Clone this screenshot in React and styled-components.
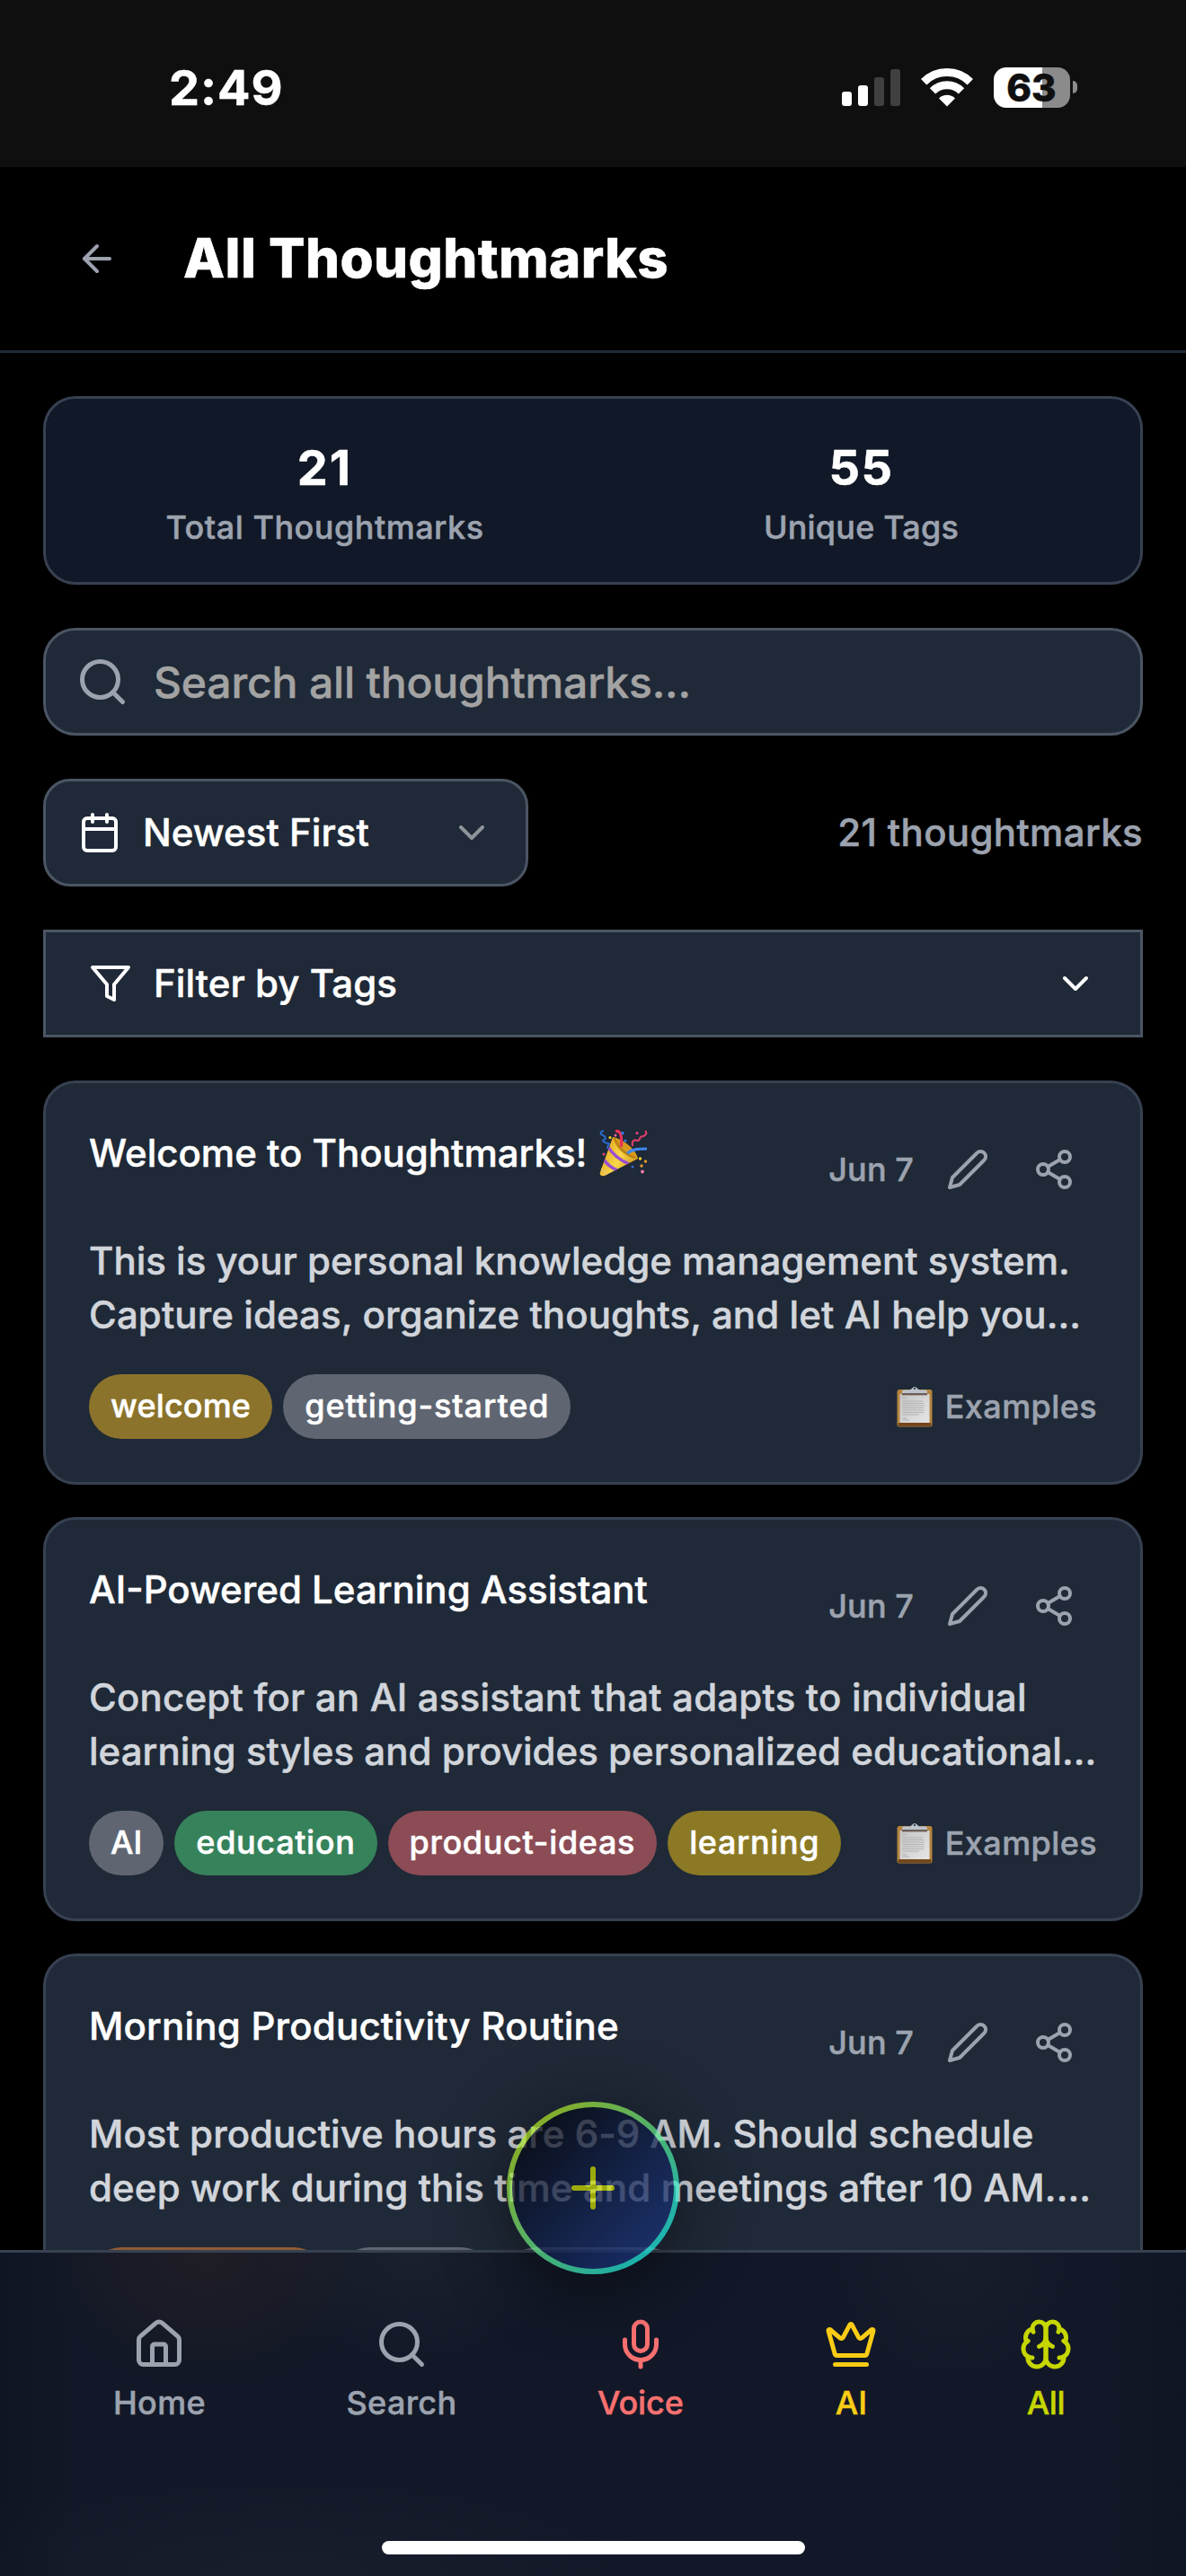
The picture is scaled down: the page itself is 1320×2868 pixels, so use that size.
import React from "react";
import styled, { createGlobalStyle } from "styled-components";
import {
  ArrowLeft,
  Search,
  Calendar,
  ChevronDown,
  Share2,
  House,
  Mic,
  Crown,
  Plus,
} from "lucide-react";

const GlobalStyle = createGlobalStyle`
  * { box-sizing: border-box; }
  html, body { margin: 0; padding: 0; background: #000; }
  body {
    font-family: Inter, "Liberation Sans", sans-serif;
    font-weight: 500;
    color: #fff;
    -webkit-font-smoothing: antialiased;
    -webkit-text-stroke: 0.5px currentColor;
  }
  svg { display: block; flex: none; }
`;

const Text = styled.span`
  letter-spacing: ${(p) => p.$tracking || 0}px;
`;

const Screen = styled.div`
  position: relative;
  width: 1320px;
  height: 2868px;
  overflow: hidden;
  background: #000;
`;

const StatusBar = styled.div`
  display: flex;
  align-items: center;
  justify-content: space-between;
  height: 186px;
  padding: 8px 121px 0 188px;
  background: #0f0f0f;
`;

const Clock = styled(Text)`
  padding-top: 1px;
  font-size: 54px;
  font-weight: 700;
  line-height: 60px;
`;

const StatusIcons = styled.div`
  display: flex;
  align-items: center;
  gap: 23px;
`;

const Signal = styled.div`
  display: flex;
  align-items: flex-end;
  gap: 7px;
  height: 41px;
`;

const SignalBar = styled.span`
  width: 11px;
  height: ${(p) => p.$h}px;
  border-radius: 3px;
  background: ${(p) => (p.$on ? "#fff" : "#404040")};
`;

const Battery = styled.div`
  display: flex;
  align-items: center;
  gap: 3px;
`;

const BatteryBody = styled.div`
  display: flex;
  align-items: center;
  justify-content: center;
  width: 85px;
  height: 45px;
  padding-right: 1px;
  border-radius: 14px;
  background: linear-gradient(90deg, #fff 54px, #8b8b8b 54px);
  color: #0f0f0f;
  font-size: 42px;
  font-weight: 800;
  line-height: 45px;
`;

const BatteryNub = styled.span`
  width: 5px;
  height: 14px;
  border-radius: 0 7px 7px 0;
  background: #8b8b8b;
`;

const Header = styled.header`
  display: flex;
  align-items: center;
  gap: 36px;
  height: 207px;
  padding: 0 48px;
  border-bottom: 3px solid #1f2937;
`;

const BackButton = styled.button`
  display: flex;
  padding: 36px;
  border: 0;
  background: none;
  color: #9ca3af;
`;

const Title = styled.h1`
  margin: 0;
  padding-bottom: 2px;
  font-size: 60px;
  font-weight: 800;
  line-height: 84px;
  letter-spacing: 0.4px;
`;

const Main = styled.main`
  display: flex;
  flex-direction: column;
  gap: 48px;
  padding: 48px;
`;

const Stats = styled.section`
  display: grid;
  grid-template-columns: 1fr 1fr;
  gap: 48px;
  height: 210px;
  padding: 36px;
  border: 3px solid #374151;
  border-radius: 36px;
  background: #111827;
  text-align: center;
`;

const StatValue = styled.div`
  margin-bottom: 1px;
  font-size: 54px;
  font-weight: 700;
  line-height: 82px;
`;

const StatLabel = styled.div`
  color: #9ca3af;
  font-size: 36px;
  line-height: 48px;
`;

const SearchField = styled.label`
  display: flex;
  align-items: center;
  gap: 27px;
  height: 120px;
  padding: 0 33px;
  border: 3px solid #4b5563;
  border-radius: 36px;
  background: #1f2937;
  color: #9ca3af;
`;

const Placeholder = styled(Text)`
  padding-top: 1px;
  color: #a3a3a3;
  font-size: 48px;
  line-height: 72px;
`;

const SortRow = styled.div`
  display: flex;
  align-items: center;
  justify-content: space-between;
`;

const SortSelect = styled.button`
  display: flex;
  align-items: center;
  gap: 24px;
  width: 540px;
  height: 120px;
  padding: 0 36px;
  border: 3px solid #4b5563;
  border-radius: 30px;
  background: #1f2937;
  color: #fff;
  font: inherit;
`;

const FilterButton = styled(SortSelect)`
  width: 100%;
  padding: 0 48px;
  border-radius: 0;
`;

const ControlText = styled(Text)`
  flex: 1;
  text-align: left;
  font-size: 42px;
  line-height: 60px;
`;

const ResultCount = styled(Text)`
  color: #9ca3af;
  font-size: 42px;
  line-height: 60px;
`;

const CardList = styled.div`
  display: flex;
  flex-direction: column;
  gap: 36px;
`;

const Card = styled.article`
  height: 450px;
  padding: 48px;
  border: 3px solid #374151;
  border-radius: 36px;
  background: #1f2937;
`;

const CardHeader = styled.div`
  display: flex;
  align-items: flex-start;
  justify-content: space-between;
  margin-bottom: 24px;
`;

const CardTitle = styled.h3`
  display: flex;
  align-items: center;
  gap: 14px;
  margin: 0;
  font-size: 42px;
  font-weight: 500;
  line-height: 60px;
  white-space: nowrap;
`;

const CardActions = styled.div`
  display: flex;
  align-items: center;
  color: #9ca3af;
`;

const CardDate = styled.span`
  margin-right: 12px;
  padding-bottom: 1px;
  font-size: 36px;
  line-height: 48px;
  letter-spacing: 0.1px;
`;

const IconButton = styled.button`
  display: flex;
  padding: 24px;
  border: 0;
  background: none;
  color: inherit;
`;

const Excerpt = styled.p`
  margin: 0 0 36px;
  color: #d1d5db;
  font-size: 42px;
  line-height: 60px;
  white-space: nowrap;
`;

const CardFooter = styled.div`
  display: flex;
  align-items: center;
  justify-content: space-between;
`;

const Tags = styled.div`
  display: flex;
  gap: 12px;
`;

const Tag = styled(Text)`
  height: 72px;
  padding: 0 24px;
  border-radius: 36px;
  background: ${(p) => p.$bg};
  font-size: 36px;
  line-height: 71px;
`;

const Bin = styled.span`
  display: flex;
  align-items: center;
  gap: 14px;
  color: #9ca3af;
  font-size: 36px;
  line-height: 47px;
  letter-spacing: 0.4px;
`;

const BottomNav = styled.nav`
  position: absolute;
  left: 0;
  right: 0;
  bottom: 0;
  display: flex;
  flex-direction: column;
  align-items: center;
  justify-content: space-between;
  height: 363px;
  padding: 72px 0 24px;
  border-top: 3px solid #374151;
  background:
    radial-gradient(190px 150px at 230px 0, rgba(110, 60, 30, 0.15), rgba(110, 60, 30, 0)) padding-box,
    radial-gradient(170px 130px at 460px 0, rgba(95, 102, 114, 0.1), rgba(95, 102, 114, 0)) padding-box,
    radial-gradient(150px 160px at 1060px 0, rgba(95, 102, 114, 0.07), rgba(95, 102, 114, 0)) padding-box,
    radial-gradient(420px 120px at 320px 100%, rgba(95, 102, 114, 0.08), rgba(95, 102, 114, 0)) padding-box,
    linear-gradient(90deg, #0f1522, #121827 80px, #121827 1240px, #0f1522) padding-box;
`;

const NavItems = styled.div`
  display: flex;
  justify-content: space-between;
  align-self: stretch;
  padding: 0 126px;
`;

const NavItem = styled.a`
  display: flex;
  flex-direction: column;
  align-items: center;
  gap: 11px;
  color: ${(p) => p.$color};
  font-size: 36px;
  line-height: 48px;
`;

const HomeIndicator = styled.div`
  width: 471px;
  height: 15px;
  border-radius: 8px;
  background: #fff;
`;

const AddButton = styled.button`
  position: absolute;
  left: 564px;
  top: 2340px;
  display: flex;
  align-items: center;
  justify-content: center;
  width: 192px;
  height: 192px;
  padding: 0;
  border: 6px solid transparent;
  border-radius: 50%;
  background:
    linear-gradient(135deg, #000 0%, #1e3a8a 100%) padding-box,
    linear-gradient(135deg, #c6d800 0%, #00e5ff 100%) border-box;
  box-shadow: 0 12px 72px rgba(0, 0, 0, 0.6);
  color: #c6d600;
  opacity: 0.75;
`;

const WifiIcon = () => (
  <svg width="58" height="43" viewBox="0 0 58 43">
    <g fill="none" stroke="#fff">
      <path d="M3.2 15.2 A36.5 36.5 0 0 1 54.8 15.2" strokeWidth="9" />
      <path d="M13 25.4 A22.6 22.6 0 0 1 45 25.4" strokeWidth="9" />
    </g>
    <path d="M29 42.5 L20 33.4 A12.7 12.7 0 0 1 38 33.4 Z" fill="#fff" />
  </svg>
);

const StrokeIcon = ({ size, children }) => (
  <svg
    width={size}
    height={size}
    viewBox="0 0 24 24"
    fill="none"
    stroke="currentColor"
    strokeWidth="2"
    strokeLinecap="round"
    strokeLinejoin="round"
  >
    {children}
  </svg>
);

const FilterIcon = () => (
  <StrokeIcon size={48}>
    <polygon points="22 3 2 3 10 12.46 10 19 14 21 14 12.46 22 3" />
  </StrokeIcon>
);

const PenIcon = () => (
  <StrokeIcon size={48}>
    <path d="M17 3a2.85 2.83 0 1 1 4 4L7.5 20.5 2 22l1.5-5.5Z" />
  </StrokeIcon>
);

const BrainIcon = () => (
  <StrokeIcon size={60}>
    <path d="M12 5a3 3 0 1 0-5.997.125 4 4 0 0 0-2.526 5.77 4 4 0 0 0 .556 6.588A4 4 0 1 0 12 18Z" />
    <path d="M12 5a3 3 0 1 1 5.997.125 4 4 0 0 1 2.526 5.77 4 4 0 0 1-.556 6.588A4 4 0 1 1 12 18Z" />
    <path d="M15 13a4.5 4.5 0 0 1-3-4 4.5 4.5 0 0 1-3 4" />
    <path d="M17.599 6.5a3 3 0 0 0 .399-1.375" />
    <path d="M6.003 5.125A3 3 0 0 0 6.401 6.5" />
    <path d="M3.477 10.896a4 4 0 0 1 .585-.396" />
    <path d="M19.938 10.5a4 4 0 0 1 .585.396" />
    <path d="M6 18a4 4 0 0 1-1.967-.516" />
    <path d="M19.967 17.484A4 4 0 0 1 18 18" />
  </StrokeIcon>
);

const PartyPopper = () => (
  <svg width="54" height="54" viewBox="0 0 54 54">
    <defs>
      <linearGradient id="cone" x1="0" y1="0.3" x2="1" y2="0.8">
        <stop offset="0" stopColor="#e0a21c" />
        <stop offset="0.5" stopColor="#f9d84a" />
        <stop offset="1" stopColor="#c98a12" />
      </linearGradient>
      <clipPath id="coneClip">
        <path d="M15 9 C27 13 39 24 43 33 L6 52 C2 53 0 51 1 48 Z" />
      </clipPath>
    </defs>
    <path d="M15 9 C27 13 39 24 43 33 L6 52 C2 53 0 51 1 48 Z" fill="url(#cone)" />
    <g clipPath="url(#coneClip)" stroke="#9a4fd0" strokeWidth="3.6" fill="none">
      <path d="M10 20 C15 29 22 34 33 39" />
      <path d="M5 34 C9 40 13 43 20 46" />
      <path d="M1 43 C4 47 6 49 10 51" stroke="#e9c26a" strokeWidth="2" />
    </g>
    <path d="M15 9 C17 21 30 33 43 33 C41 23 27 11 15 9 Z" fill="#d79a1e" />
    <path d="M17 10 C20 19 29 29 40 32" fill="none" stroke="#b57f16" strokeWidth="2" />
    <path d="M18 2.5 C25 1 25 10 24.5 20" fill="none" stroke="#e8325a" strokeWidth="3.2" />
    <path d="M31 27 C37 22 44 22 53 22" fill="none" stroke="#3f86f0" strokeWidth="3.2" />
    <path
      d="M5 2 C0 3 1 6 4 7 S8 11 5 12 S7 16 10 16 S8 19 9 22"
      fill="none"
      stroke="#2b68c8"
      strokeWidth="2"
    />
    <path
      d="M51 2 C54 5 51 7 49 8 S46 7 45 11 S40 11 38 13 S37 15 37 19"
      fill="none"
      stroke="#d83f6a"
      strokeWidth="2.2"
    />
    <circle cx="26" cy="4.5" r="1.7" fill="#2f7cf0" />
    <circle cx="29" cy="13" r="1.5" fill="#2f7cf0" />
    <circle cx="42" cy="4.5" r="1.6" fill="#e8477a" />
    <circle cx="18" cy="7" r="1.5" fill="#f06a9a" />
    <circle cx="12" cy="9.5" r="1.6" fill="#f5d21f" />
    <circle cx="5" cy="28" r="1.5" fill="#e8477a" />
    <circle cx="45.5" cy="33" r="1.7" fill="#f5d21f" />
    <circle cx="51.5" cy="36" r="1.7" fill="#e59a2a" />
    <circle cx="47" cy="41" r="1.7" fill="#e59a2a" />
    <circle cx="37" cy="42" r="1.5" fill="#2f6cd0" />
    <circle cx="48" cy="47.5" r="1.9" fill="#f47aa8" />
  </svg>
);

const Clipboard = () => (
  <svg width="40" height="46" viewBox="0 0 40 46">
    <defs>
      <linearGradient id="paper" x1="0" y1="0" x2="1" y2="1">
        <stop offset="0" stopColor="#c4c4c4" />
        <stop offset="1" stopColor="#e6e6e6" />
      </linearGradient>
    </defs>
    <rect x="0.5" y="4" width="39" height="41.5" rx="2.5" fill="#b5843f" />
    <rect x="1.5" y="41" width="37" height="4" rx="1.5" fill="#74481c" />
    <rect x="3.5" y="9" width="33" height="32" fill="url(#paper)" />
    <rect x="6" y="8" width="28" height="2.4" fill="#6e5f58" />
    <path
      d="M6 8 V6.5 Q6 4.5 8.5 4.5 H14 Q16 4.5 17 2.8 Q20 -1 23 2.8 Q24 4.5 26 4.5 H31.5 Q34 4.5 34 6.5 V8 Z"
      fill="#bcc3cc"
    />
    <circle cx="20" cy="2.9" r="1.2" fill="#3a4a5c" />
    <path
      d="M6 13.5H11M6.5 17H29M6.5 19.5H30M6.5 22H31M6.5 24.5H30M6.5 27H31M6.5 29.5H30M6.5 32H25M6.5 36H11M6.5 38H14"
      stroke="#b2b2b2"
      strokeWidth="1.1"
    />
  </svg>
);

const GRAY = "#5f6672";

const stats = [
  { value: "21", valueTracking: 2, label: "Total Thoughtmarks", labelTracking: 0.5 },
  { value: "55", valueTracking: 1.5, label: "Unique Tags", labelTracking: 0.2 },
];

const marks = [
  {
    title: "Welcome to Thoughtmarks!",
    tracking: 0,
    emoji: true,
    lines: [
      ["This is your personal knowledge management system.", 0],
      ["Capture ideas, organize thoughts, and let AI help you...", 0.09],
    ],
    tags: [
      ["welcome", "#8b732b", 0.15],
      ["getting-started", GRAY, 0.9],
    ],
  },
  {
    title: "AI-Powered Learning Assistant",
    tracking: 0,
    lines: [
      ["Concept for an AI assistant that adapts to individual", 0.2],
      ["learning styles and provides personalized educational...", 0.03],
    ],
    tags: [
      ["AI", GRAY, 0],
      ["education", "#36825a", 0.65],
      ["product-ideas", "#8b4c55", 0.68],
      ["learning", "#8b7925", 0.6],
    ],
  },
  {
    title: "Morning Productivity Routine",
    tracking: 0.2,
    lines: [
      ["Most productive hours are 6-9 AM. Should schedule", 0.06],
      ["deep work during this time and meetings after 10 AM....", 0.12],
    ],
    tags: [
      ["productivity", "#8f5c35", 0.8],
      ["routine", GRAY, 0.7],
      ["morning", GRAY, 0.7],
    ],
  },
];

const navItems = [
  ["Home", House, "#9ca3af", 0.3],
  ["Search", Search, "#9ca3af", 0.35],
  ["Voice", Mic, "#f87171", -0.1],
  ["AI", Crown, "#facc15", 0],
  ["All", BrainIcon, "#c6d600", -0.4],
];

export default function App() {
  return (
    <Screen>
      <GlobalStyle />
      <StatusBar>
        <Clock $tracking={1}>2:49</Clock>
        <StatusIcons>
          <Signal>
            <SignalBar $h={16} $on />
            <SignalBar $h={23} $on />
            <SignalBar $h={32} />
            <SignalBar $h={41} />
          </Signal>
          <WifiIcon />
          <Battery>
            <BatteryBody>63</BatteryBody>
            <BatteryNub />
          </Battery>
        </StatusIcons>
      </StatusBar>

      <Header>
        <BackButton>
          <ArrowLeft size={48} />
        </BackButton>
        <Title>All Thoughtmarks</Title>
      </Header>

      <Main>
        <Stats>
          {stats.map((s) => (
            <div key={s.label}>
              <StatValue>
                <Text $tracking={s.valueTracking}>{s.value}</Text>
              </StatValue>
              <StatLabel>
                <Text $tracking={s.labelTracking}>{s.label}</Text>
              </StatLabel>
            </div>
          ))}
        </Stats>

        <SearchField>
          <Search size={60} />
          <Placeholder $tracking={-0.15}>Search all thoughtmarks...</Placeholder>
        </SearchField>

        <SortRow>
          <SortSelect>
            <Calendar size={48} />
            <ControlText $tracking={0.05}>Newest First</ControlText>
            <ChevronDown size={48} opacity={0.5} />
          </SortSelect>
          <ResultCount $tracking={0.35}>21 thoughtmarks</ResultCount>
        </SortRow>

        <FilterButton>
          <FilterIcon />
          <ControlText $tracking={0.08}>Filter by Tags</ControlText>
          <ChevronDown size={48} />
        </FilterButton>

        <CardList>
          {marks.map((m) => (
            <Card key={m.title}>
              <CardHeader>
                <CardTitle>
                  <Text $tracking={m.tracking}>{m.title}</Text>
                  {m.emoji && <PartyPopper />}
                </CardTitle>
                <CardActions>
                  <CardDate>Jun 7</CardDate>
                  <IconButton>
                    <PenIcon />
                  </IconButton>
                  <IconButton>
                    <Share2 size={48} />
                  </IconButton>
                </CardActions>
              </CardHeader>
              <Excerpt>
                <Text $tracking={m.lines[0][1]}>{m.lines[0][0]}</Text>
                <br />
                <Text $tracking={m.lines[1][1]}>{m.lines[1][0]}</Text>
              </Excerpt>
              <CardFooter>
                <Tags>
                  {m.tags.map(([label, bg, tracking]) => (
                    <Tag key={label} $bg={bg} $tracking={tracking}>
                      {label}
                    </Tag>
                  ))}
                </Tags>
                <Bin>
                  <Clipboard />
                  Examples
                </Bin>
              </CardFooter>
            </Card>
          ))}
        </CardList>
      </Main>

      <BottomNav>
        <NavItems>
          {navItems.map(([label, Icon, color, tracking]) => (
            <NavItem key={label} $color={color}>
              <Icon size={60} />
              <Text $tracking={tracking}>{label}</Text>
            </NavItem>
          ))}
        </NavItems>
        <HomeIndicator />
      </BottomNav>

      <AddButton>
        <Plus size={72} />
      </AddButton>
    </Screen>
  );
}
